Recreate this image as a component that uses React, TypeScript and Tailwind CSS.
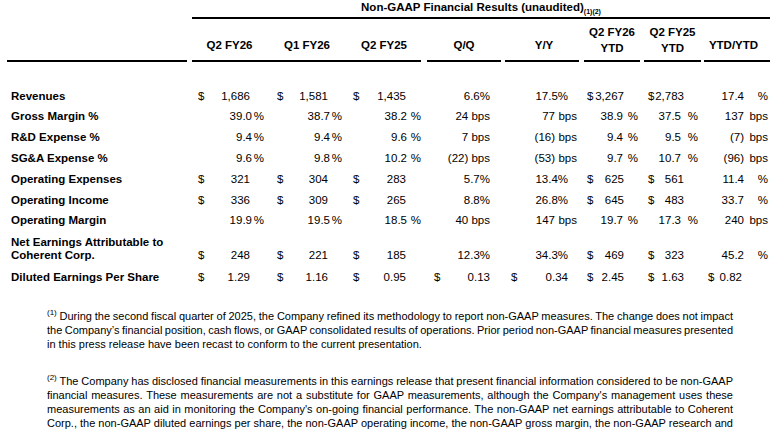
import React from "react";

type Cell = { d?: boolean; v: string; s?: string };
type Col = { cls: string; npr: string; sw: string; spr: string };

const cols: Col[] = [
  { cls: "ml-[5px] w-[75px] pl-[6px]", npr: "pr-[17px]", sw: "w-[15px]", spr: "pr-[3px]" },
  { cls: "w-[80px] pl-[10px]", npr: "pr-[19px]", sw: "w-[17px]", spr: "pr-[5px]" },
  { cls: "w-[74px] pl-[6px]", npr: "pr-[15px]", sw: "w-[14px]", spr: "pr-[0px]" },
  { cls: "ml-[6px] w-[74px] pl-[7px]", npr: "pr-[11px]", sw: "w-[0px]", spr: "pr-[0px]" },
  { cls: "ml-[4px] w-[74px] pl-[6px]", npr: "pr-[11px]", sw: "w-[24px]", spr: "pr-[2px]" },
  { cls: "ml-[5px] w-[56px] pl-[3px]", npr: "pr-[16px]", sw: "w-[17px]", spr: "pr-[2px]" },
  { cls: "ml-[4px] w-[57px] pl-[4px]", npr: "pr-[17px]", sw: "w-[20px]", spr: "pr-[3px]" },
  { cls: "ml-[3px] w-[66px] pl-[4px]", npr: "pr-[28px]", sw: "w-[26px]", spr: "pr-[2px]" },
];

const D = (v: string): Cell => ({ d: true, v });
const P = (v: string): Cell => ({ v, s: "%" });
const B = (v: string): Cell => ({ v, s: "bps" });
const T = (v: string): Cell => ({ v });

const rows: { label: React.ReactNode; cells: Cell[]; tall?: boolean }[] = [
  { label: "Revenues", cells: [D("1,686"), D("1,581"), D("1,435"), T("6.6%"), T("17.5%"), D("3,267"), D("2,783"), P("17.4")] },
  { label: "Gross Margin %", cells: [P("39.0"), P("38.7"), P("38.2"), T("24 bps"), B("77"), P("38.9"), P("37.5"), B("137")] },
  { label: "R&D Expense %", cells: [P("9.4"), P("9.4"), P("9.6"), T("7 bps"), B("(16)"), P("9.4"), P("9.5"), B("(7)")] },
  { label: "SG&A Expense %", cells: [P("9.6"), P("9.8"), P("10.2"), T("(22) bps"), B("(53)"), P("9.7"), P("10.7"), B("(96)")] },
  { label: "Operating Expenses", cells: [D("321"), D("304"), D("283"), T("5.7%"), T("13.4%"), D("625"), D("561"), P("11.4")] },
  { label: "Operating Income", cells: [D("336"), D("309"), D("265"), T("8.8%"), T("26.8%"), D("645"), D("483"), P("33.7")] },
  { label: "Operating Margin", cells: [P("19.9"), P("19.5"), P("18.5"), T("40 bps"), B("147"), P("19.7"), P("17.3"), B("240")] },
  {
    label: (
      <>
        Net Earnings Attributable to
        <br />
        Coherent Corp.
      </>
    ),
    tall: true,
    cells: [D("248"), D("221"), D("185"), T("12.3%"), T("34.3%"), D("469"), D("323"), P("45.2")],
  },
  { label: "Diluted Earnings Per Share", cells: [D("1.29"), D("1.16"), D("0.95"), D("0.13"), D("0.34"), D("2.45"), D("1.63"), D("0.82")] },
];

function DataCell({ c, col }: { c: Cell; col: Col }) {
  return (
    <div className={`flex shrink-0 ${col.cls}`}>
      <span className="shrink-0">{c.d ? "$" : ""}</span>
      <span className={`min-w-0 flex-1 text-right ${c.s ? "" : col.npr}`}>{c.v}</span>
      {c.s ? <span className={`shrink-0 text-right ${col.sw} ${col.spr}`}>{c.s}</span> : null}
    </div>
  );
}

const J = "whitespace-nowrap text-justify [text-align-last:justify] [word-spacing:-1.5px]";

export default function App() {
  return (
    <div className="h-[440px] w-[778px] overflow-hidden bg-white font-['Liberation_Sans',Arial,sans-serif] text-[11.5px] text-black">
      {/* Title */}
      <div className="ml-[192px] w-[578px] border-b-2 border-black pb-[2px] pt-[1px] text-center font-bold leading-[13px]">
        Non-GAAP Financial Results (unaudited)
        <span className="align-sub text-[7px] leading-none">(1)(2)</span>
      </div>

      {/* Header */}
      <div className="flex h-[43px] font-bold">
        <div className="ml-[7px] w-[180px] shrink-0 border-b-2 border-black" />
        <div className="ml-[5px] flex w-[75px] shrink-0 items-end justify-center border-b-2 border-black pb-[8.5px] leading-[13px]">Q2 FY26</div>
        <div className="flex w-[80px] shrink-0 items-end justify-center border-b-2 border-black pb-[8.5px] leading-[13px]">Q1 FY26</div>
        <div className="flex w-[74px] shrink-0 items-end justify-center border-b-2 border-black pb-[8.5px] leading-[13px]">Q2 FY25</div>
        <div className="ml-[6px] flex w-[74px] shrink-0 items-end justify-center border-b-2 border-black pb-[8.5px] leading-[13px]">Q/Q</div>
        <div className="ml-[4px] flex w-[74px] shrink-0 items-end justify-center border-b-2 border-black pb-[8.5px] pl-[4px] leading-[13px]">Y/Y</div>
        <div className="ml-[5px] flex w-[56px] shrink-0 flex-col items-center justify-end border-b-2 border-black pb-[4px] leading-[16px]">
          <span>Q2 FY26</span>
          <span>YTD</span>
        </div>
        <div className="ml-[4px] flex w-[57px] shrink-0 flex-col items-center justify-end border-b-2 border-black pb-[4px] leading-[16px]">
          <span>Q2 FY25</span>
          <span>YTD</span>
        </div>
        <div className="ml-[3px] flex w-[66px] shrink-0 items-end justify-center border-b-2 border-black pb-[8.5px] pr-[7px] leading-[13px]">YTD/YTD</div>
      </div>

      {/* Rows */}
      <div className="mt-[23.5px]">
        {rows.map((r, i) => (
          <div
            key={i}
            className={r.tall ? "flex h-[35.4px] items-end pb-[5px] leading-[13px]" : "flex h-[20.8px] items-center leading-[13px]"}
          >
            <div className="ml-[7px] w-[180px] shrink-0 pl-[4px] font-bold">{r.label}</div>
            {r.cells.map((c, j) => (
              <DataCell key={j} c={c} col={cols[j]} />
            ))}
          </div>
        ))}
      </div>

      {/* Footnotes */}
      <div className="ml-[47px] mt-[21.7px] w-[686px] text-[11px] leading-[14px]">
        <div className={J}>
          <span className="align-super text-[8px] leading-none">(1)</span> During the second fiscal quarter of 2025, the Company refined its methodology to report non-GAAP measures. The change does not impact
        </div>
        <div className={J}>
          the Company’s financial position, cash flows, or GAAP consolidated results of operations. Prior period non-GAAP financial measures presented
        </div>
        <div className="whitespace-nowrap">in this press release have been recast to conform to the current presentation.</div>
      </div>

      <div className="ml-[47px] mt-[23px] w-[686px] text-[11px] leading-[14px]">
        <div className={J}>
          <span className="align-super text-[8px] leading-none">(2)</span> The Company has disclosed financial measurements in this earnings release that present financial information considered to be non-GAAP
        </div>
        <div className={J}>
          financial measures. These measurements are not a substitute for GAAP measurements, although the Company's management uses these
        </div>
        <div className={J}>
          measurements as an aid in monitoring the Company's on-going financial performance. The non-GAAP net earnings attributable to Coherent
        </div>
        <div className={J}>
          Corp., the non-GAAP diluted earnings per share, the non-GAAP operating income, the non-GAAP gross margin, the non-GAAP research and
        </div>
      </div>
    </div>
  );
}
